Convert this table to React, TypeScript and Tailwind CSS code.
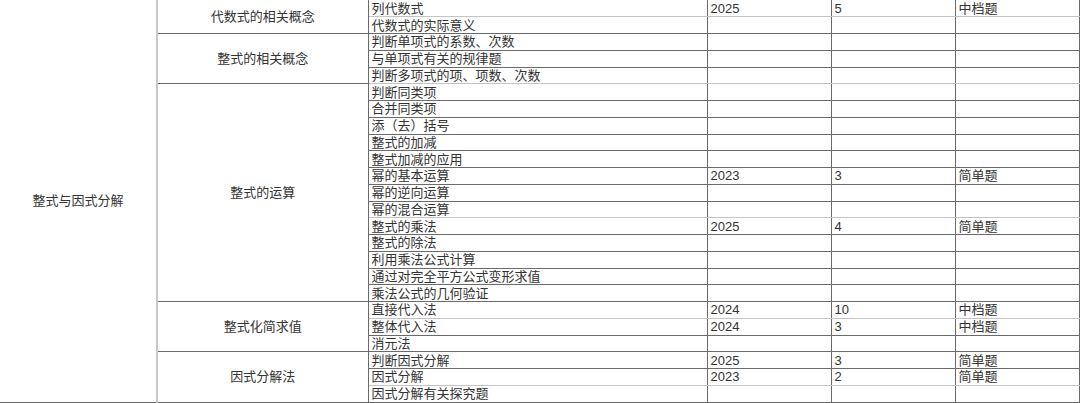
import React from 'react';

type Row = {
  item: string;
  year?: string;
  count?: string;
  level?: string;
  light?: boolean; // lighter bottom rule, as in the sheet capture
};

type Group = { name: string; rows: Row[] };

const groups: Group[] = [
  {
    name: '代数式的相关概念',
    rows: [
      { item: '列代数式', year: '2025', count: '5', level: '中档题', light: true },
      { item: '代数式的实际意义' },
    ],
  },
  {
    name: '整式的相关概念',
    rows: [
      { item: '判断单项式的系数、次数' },
      { item: '与单项式有关的规律题' },
      { item: '判断多项式的项、项数、次数', light: true },
    ],
  },
  {
    name: '整式的运算',
    rows: [
      { item: '判断同类项' },
      { item: '合并同类项' },
      { item: '添（去）括号' },
      { item: '整式的加减' },
      { item: '整式加减的应用' },
      { item: '幂的基本运算', year: '2023', count: '3', level: '简单题' },
      { item: '幂的逆向运算' },
      { item: '幂的混合运算', light: true },
      { item: '整式的乘法', year: '2025', count: '4', level: '简单题' },
      { item: '整式的除法' },
      { item: '利用乘法公式计算' },
      { item: '通过对完全平方公式变形求值' },
      { item: '乘法公式的几何验证' },
    ],
  },
  {
    name: '整式化简求值',
    rows: [
      { item: '直接代入法', year: '2024', count: '10', level: '中档题', light: true },
      { item: '整体代入法', year: '2024', count: '3', level: '中档题' },
      { item: '消元法' },
    ],
  },
  {
    name: '因式分解法',
    rows: [
      { item: '判断因式分解', year: '2025', count: '3', level: '简单题' },
      { item: '因式分解', year: '2023', count: '2', level: '简单题', light: true },
      { item: '因式分解有关探究题' },
    ],
  },
];

const total = groups.reduce((n, g) => n + g.rows.length, 0);

const font = {
  fontFamily: '"Liberation Sans", "Noto Sans CJK SC", sans-serif',
};

export default function App() {
  return (
    <div className="w-[1080px] h-[403px] overflow-hidden bg-white text-[13px] text-[#333]" style={font}>
      <table className="w-[1079px] table-fixed border-collapse">
        <colgroup>
          <col className="w-[157px]" />
          <col className="w-[211px]" />
          <col className="w-[339px]" />
          <col className="w-[124px]" />
          <col className="w-[124px]" />
          <col className="w-[124px]" />
        </colgroup>
        <tbody>
          {groups.map((g, gi) =>
            g.rows.map((r, ri) => {
              const rule = r.light ? 'border-b-[#c4c4c4]' : 'border-b-[#6a6a6a]';
              return (
                <tr key={`${gi}-${ri}`} className="h-[16.75px]">
                  {gi === 0 && ri === 0 && (
                    <td
                      rowSpan={total}
                      className="border-b border-b-[#6a6a6a] border-r-2 border-r-[#c8c8c8] text-center align-middle leading-none"
                    >
                      整式与因式分解
                    </td>
                  )}
                  {ri === 0 && (
                    <td
                      rowSpan={g.rows.length}
                      className="border-b border-r border-[#6a6a6a] text-center align-middle leading-none"
                    >
                      {g.name}
                    </td>
                  )}
                  <td className={`border-b border-r border-[#6a6a6a] ${rule} pl-[3px] p-0 leading-none whitespace-nowrap`}>
                    {r.item}
                  </td>
                  <td className={`border-b border-r border-[#6a6a6a] ${rule} pl-[3px] p-0 leading-none`}>
                    {r.year}
                  </td>
                  <td className={`border-b border-r border-[#6a6a6a] ${rule} pl-[3px] p-0 leading-none`}>
                    {r.count}
                  </td>
                  <td className={`border-b border-r border-[#6a6a6a] ${rule} pl-[3px] p-0 leading-none`}>
                    {r.level}
                  </td>
                </tr>
              );
            })
          )}
        </tbody>
      </table>
    </div>
  );
}
